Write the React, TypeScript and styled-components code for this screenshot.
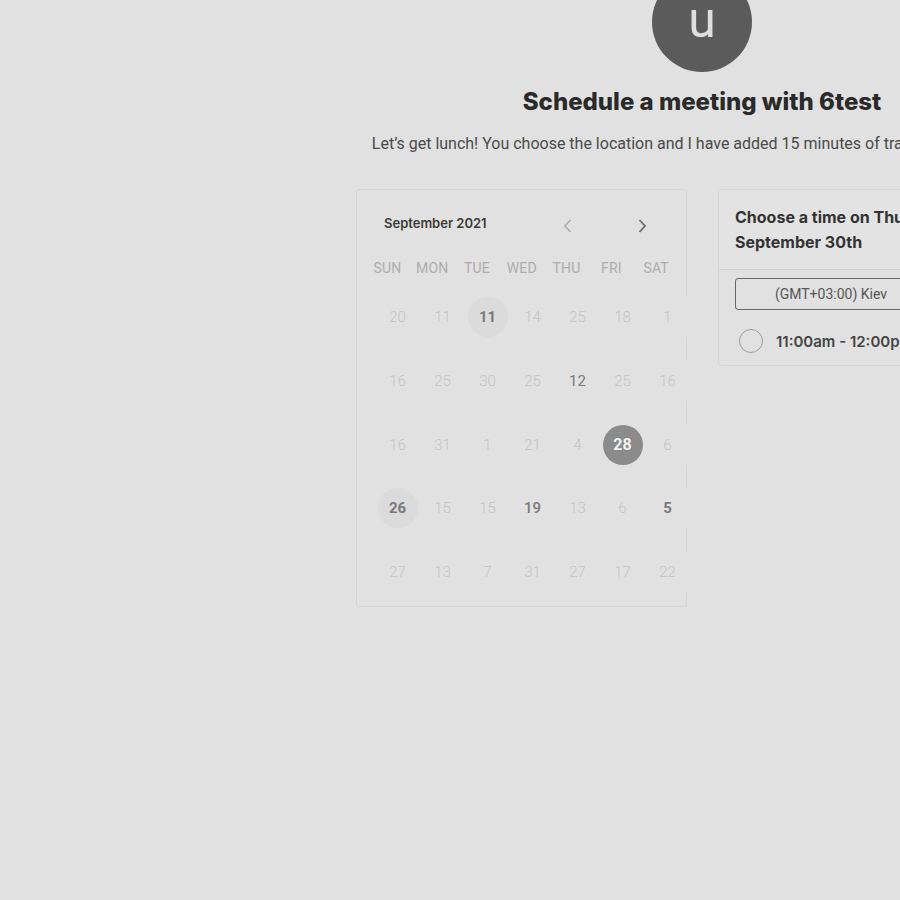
import React from "react";
import styled, { createGlobalStyle } from "styled-components";

const Global = createGlobalStyle`
  html, body { margin: 0; padding: 0; background: #e1e1e1; overflow: hidden; }
  body { font-family: "Roboto", "Liberation Sans", sans-serif; }
`;

const Page = styled.div`
  width: 1404px;
  display: flex;
  flex-direction: column;
  align-items: center;
`;

const Avatar = styled.div`
  width: 100px;
  height: 100px;
  border-radius: 50%;
  background: #5b5b5b;
  color: #dedede;
  margin-top: -28px;
  display: flex;
  align-items: center;
  justify-content: center;
  font-family: "Roboto", sans-serif;
  font-size: 50px;
  font-weight: 400;
  line-height: 1;
  padding-bottom: 4px;
  box-sizing: border-box;
`;

const Title = styled.h1`
  margin: 17px 0 0;
  font-family: "Inter", sans-serif;
  font-weight: 800;
  font-size: 24px;
  line-height: 26px;
  color: #2a2a2a;
`;

const Subtitle = styled.p`
  margin: 19px 0 0;
  font-family: "Roboto", sans-serif;
  font-size: 16px;
  line-height: 20px;
  color: #4a4a4a;
  white-space: nowrap;
`;

const Cards = styled.div`
  display: flex;
  align-items: flex-start;
  gap: 31px;
  margin-top: 35px;
`;

const CalendarCard = styled.div`
  width: 331px;
  height: 418px;
  box-sizing: border-box;
  border: 1px solid #d5d5d5;
  border-radius: 3px;
  background: #e1e1e1;
  padding: 18px 0 0 8px;
`;

const CalHeader = styled.div`
  display: flex;
  align-items: center;
  height: 30px;
  padding-left: 19px;
`;

const Month = styled.div`
  font-family: "Inter", sans-serif;
  font-weight: 600;
  font-size: 13px;
  color: #3a3a3a;
  width: 170px;
`;

const NavBtn = styled.div<{ $dim?: boolean }>`
  width: 20px;
  height: 20px;
  display: flex;
  align-items: center;
  justify-content: center;
  margin-top: 6px;
  margin-left: ${(p) => (p.$dim ? "4px" : "54px")};
  color: ${(p) => (p.$dim ? "#b0b0b0" : "#6a6a6a")};
`;

const WeekRow = styled.div`
  display: grid;
  grid-template-columns: repeat(7, 44.8px);
  margin-top: 20px;
  height: 20px;
  align-items: center;
`;

const WeekDay = styled.div`
  text-align: center;
  font-size: 14px;
  font-weight: 400;
  color: #adadad;
  letter-spacing: 0.2px;
`;

const DateGrid = styled.div`
  display: grid;
  grid-template-columns: repeat(7, 45px);
  row-gap: 23.75px;
  margin: 19px 0 0 10px;
  width: 315px;
`;

const DateCell = styled.div`
  height: 40px;
  background: #e1e1e1;
  display: flex;
  align-items: center;
  justify-content: center;
`;

const DateNum = styled.div<{ $kind: string }>`
  width: 40px;
  height: 40px;
  border-radius: 50%;
  display: flex;
  align-items: center;
  justify-content: center;
  font-size: ${(p) => (p.$kind === "sel" ? "16px" : "15px")};
  font-weight: ${(p) =>
    p.$kind === "sel" || p.$kind === "bold" || p.$kind === "boldc"
      ? 700
      : p.$kind === "med"
      ? 500
      : p.$kind === "reg"
      ? 400
      : 300};
  color: ${(p) =>
    p.$kind === "sel"
      ? "#f2f2f2"
      : p.$kind === "dim"
      ? "#c3c3c3"
      : "#7a7a7a"};
  background: ${(p) =>
    p.$kind === "sel" ? "#8b8b8b" : p.$kind === "boldc" ? "#dbdbdb" : "transparent"};
`;

const TimeCard = styled.div`
  width: 330px;
  box-sizing: border-box;
  border: 1px solid #d5d5d5;
  border-radius: 3px;
  background: #e1e1e1;
`;

const TimeHeader = styled.div`
  padding: 15px 16px 14px;
  border-bottom: 1px solid #d3d3d3;
  background: #e3e3e3;
  font-family: "Inter", sans-serif;
  font-weight: 700;
  font-size: 16px;
  line-height: 25px;
  color: #333;
`;

const Line = styled.span`
  display: block;
  white-space: nowrap;
`;

const TimeBody = styled.div`
  padding: 8px 16px 12px;
`;

const Zone = styled.div`
  width: 192px;
  height: 32px;
  box-sizing: border-box;
  border: 1px solid #666;
  border-radius: 3px;
  display: flex;
  align-items: center;
  justify-content: center;
  font-size: 14px;
  color: #555;
`;

const Slot = styled.div`
  display: flex;
  align-items: center;
  gap: 13px;
  margin-top: 19px;
  padding-left: 4px;
  white-space: nowrap;
`;

const Radio = styled.div`
  width: 24px;
  height: 24px;
  box-sizing: border-box;
  border: 1.5px solid #9c9c9c;
  border-radius: 50%;
  flex-shrink: 0;
`;

const SlotText = styled.span`
  font-family: "Inter", sans-serif;
  font-weight: 600;
  font-size: 15px;
  color: #444;
`;

const Chevron = ({ dir }: { dir: "l" | "r" }) => (
  <svg width="12" height="16" viewBox="0 0 12 16" fill="none">
    <path
      d={dir === "l" ? "M8.5 2 L3 8 L8.5 14" : "M3.5 2 L9 8 L3.5 14"}
      stroke="currentColor"
      strokeWidth="1.8"
    />
  </svg>
);

const weekDays = ["SUN", "MON", "TUE", "WED", "THU", "FRI", "SAT"];

type D = [string, string];
const dates: D[][] = [
  [["20", "dim"], ["11", "dim"], ["11", "boldc"], ["14", "dim"], ["25", "dim"], ["18", "dim"], ["1", "dim"]],
  [["16", "dim"], ["25", "dim"], ["30", "dim"], ["25", "dim"], ["12", "reg"], ["25", "dim"], ["16", "dim"]],
  [["16", "dim"], ["31", "dim"], ["1", "dim"], ["21", "dim"], ["4", "dim"], ["28", "sel"], ["6", "dim"]],
  [["26", "boldc"], ["15", "dim"], ["15", "dim"], ["19", "med"], ["13", "dim"], ["6", "dim"], ["5", "bold"]],
  [["27", "dim"], ["13", "dim"], ["7", "dim"], ["31", "dim"], ["27", "dim"], ["17", "dim"], ["22", "dim"]],
];

export default function App() {
  return (
    <>
      <Global />
      <Page>
        <Avatar>u</Avatar>
        <Title>Schedule a meeting with 6test</Title>
        <Subtitle>
          Let’s get lunch! You choose the location and I have added 15 minutes of travel time each way.
        </Subtitle>
        <Cards>
          <CalendarCard>
            <CalHeader>
              <Month>September 2021</Month>
              <NavBtn $dim>
                <Chevron dir="l" />
              </NavBtn>
              <NavBtn>
                <Chevron dir="r" />
              </NavBtn>
            </CalHeader>
            <WeekRow>
              {weekDays.map((w) => (
                <WeekDay key={w}>{w}</WeekDay>
              ))}
            </WeekRow>
            <DateGrid>
              {dates.flat().map(([n, k], i) => (
                <DateCell key={i}>
                  <DateNum $kind={k}>{n}</DateNum>
                </DateCell>
              ))}
            </DateGrid>
          </CalendarCard>
          <TimeCard>
            <TimeHeader>
              <Line>Choose a time on Thursday,</Line>
              <Line>September 30th</Line>
            </TimeHeader>
            <TimeBody>
              <Zone>(GMT+03:00) Kiev</Zone>
              <Slot>
                <Radio />
                <SlotText>11:00am - 12:00pm</SlotText>
              </Slot>
            </TimeBody>
          </TimeCard>
        </Cards>
      </Page>
    </>
  );
}
